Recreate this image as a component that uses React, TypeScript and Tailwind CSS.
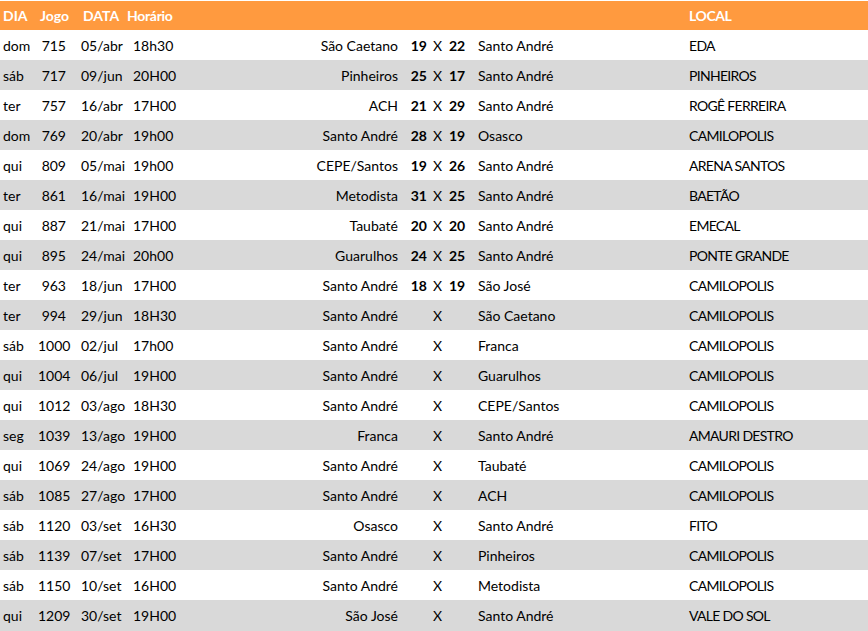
import React from "react";

type Jogo = {
  dia: string;
  num: string;
  data: string;
  hora: string;
  casa: string;
  golsCasa?: string;
  golsFora?: string;
  fora: string;
  local: string;
};

const jogos: Jogo[] = [
  { dia: "dom", num: "715", data: "05/abr", hora: "18h30", casa: "São Caetano", golsCasa: "19", golsFora: "22", fora: "Santo André", local: "EDA" },
  { dia: "sáb", num: "717", data: "09/jun", hora: "20H00", casa: "Pinheiros", golsCasa: "25", golsFora: "17", fora: "Santo André", local: "PINHEIROS" },
  { dia: "ter", num: "757", data: "16/abr", hora: "17H00", casa: "ACH", golsCasa: "21", golsFora: "29", fora: "Santo André", local: "ROGÊ FERREIRA" },
  { dia: "dom", num: "769", data: "20/abr", hora: "19h00", casa: "Santo André", golsCasa: "28", golsFora: "19", fora: "Osasco", local: "CAMILOPOLIS" },
  { dia: "qui", num: "809", data: "05/mai", hora: "19h00", casa: "CEPE/Santos", golsCasa: "19", golsFora: "26", fora: "Santo André", local: "ARENA SANTOS" },
  { dia: "ter", num: "861", data: "16/mai", hora: "19H00", casa: "Metodista", golsCasa: "31", golsFora: "25", fora: "Santo André", local: "BAETÃO" },
  { dia: "qui", num: "887", data: "21/mai", hora: "17H00", casa: "Taubaté", golsCasa: "20", golsFora: "20", fora: "Santo André", local: "EMECAL" },
  { dia: "qui", num: "895", data: "24/mai", hora: "20h00", casa: "Guarulhos", golsCasa: "24", golsFora: "25", fora: "Santo André", local: "PONTE GRANDE" },
  { dia: "ter", num: "963", data: "18/jun", hora: "17H00", casa: "Santo André", golsCasa: "18", golsFora: "19", fora: "São José", local: "CAMILOPOLIS" },
  { dia: "ter", num: "994", data: "29/jun", hora: "18H30", casa: "Santo André", fora: "São Caetano", local: "CAMILOPOLIS" },
  { dia: "sáb", num: "1000", data: "02/jul", hora: "17h00", casa: "Santo André", fora: "Franca", local: "CAMILOPOLIS" },
  { dia: "qui", num: "1004", data: "06/jul", hora: "19H00", casa: "Santo André", fora: "Guarulhos", local: "CAMILOPOLIS" },
  { dia: "qui", num: "1012", data: "03/ago", hora: "18H30", casa: "Santo André", fora: "CEPE/Santos", local: "CAMILOPOLIS" },
  { dia: "seg", num: "1039", data: "13/ago", hora: "19H00", casa: "Franca", fora: "Santo André", local: "AMAURI DESTRO" },
  { dia: "qui", num: "1069", data: "24/ago", hora: "19H00", casa: "Santo André", fora: "Taubaté", local: "CAMILOPOLIS" },
  { dia: "sáb", num: "1085", data: "27/ago", hora: "17H00", casa: "Santo André", fora: "ACH", local: "CAMILOPOLIS" },
  { dia: "sáb", num: "1120", data: "03/set", hora: "16H30", casa: "Osasco", fora: "Santo André", local: "FITO" },
  { dia: "sáb", num: "1139", data: "07/set", hora: "17H00", casa: "Santo André", fora: "Pinheiros", local: "CAMILOPOLIS" },
  { dia: "sáb", num: "1150", data: "10/set", hora: "16H00", casa: "Santo André", fora: "Metodista", local: "CAMILOPOLIS" },
  { dia: "qui", num: "1209", data: "30/set", hora: "19H00", casa: "São José", fora: "Santo André", local: "VALE DO SOL" },
];

const cols = "grid grid-cols-[38px_38px_49px_75px_200px_30px_15px_25px_215px_1fr] items-center";

export default function App() {
  return (
    <div className="w-[868px] h-[631px] overflow-hidden bg-white pt-px text-[14px] text-black" style={{ fontFamily: "Lato, 'Liberation Sans', sans-serif" }}>
      {/* cabeçalho */}
      <div className={`${cols} h-[29px] bg-[#ff9a3f] font-bold text-white`}>
        <div className="pl-[3px]">DIA</div>
        <div className="pl-[2px]">Jogo</div>
        <div className="pl-[7px]">DATA</div>
        <div className="pl-[2px] tracking-[-0.3px]">Horário</div>
        <div />
        <div />
        <div />
        <div />
        <div />
        <div className="pl-[4px] tracking-[-0.4px]">LOCAL</div>
      </div>

      {jogos.map((j, i) => (
        <div
          key={j.num}
          className={`${cols} whitespace-nowrap ${i === jogos.length - 1 ? "h-[31px]" : "h-[30px]"} ${i % 2 === 1 ? "bg-[#d9d9d9]" : "bg-white"}`}
        >
          <div className="pl-[3px]">{j.dia}</div>
          <div className="pr-[10px] text-right">{j.num}</div>
          <div className="pl-[5px]">{j.data}</div>
          <div className="pl-[8px]">{j.hora}</div>
          <div className="pr-[2px] text-right">{j.casa}</div>
          <div className="pr-[3px] text-right font-bold">{j.golsCasa}</div>
          <div className="text-center">X</div>
          <div className="pl-[4px] font-bold">{j.golsFora}</div>
          <div className="pl-[8px]">{j.fora}</div>
          <div className="pl-[4px] tracking-[-0.7px]">{j.local}</div>
        </div>
      ))}
    </div>
  );
}
